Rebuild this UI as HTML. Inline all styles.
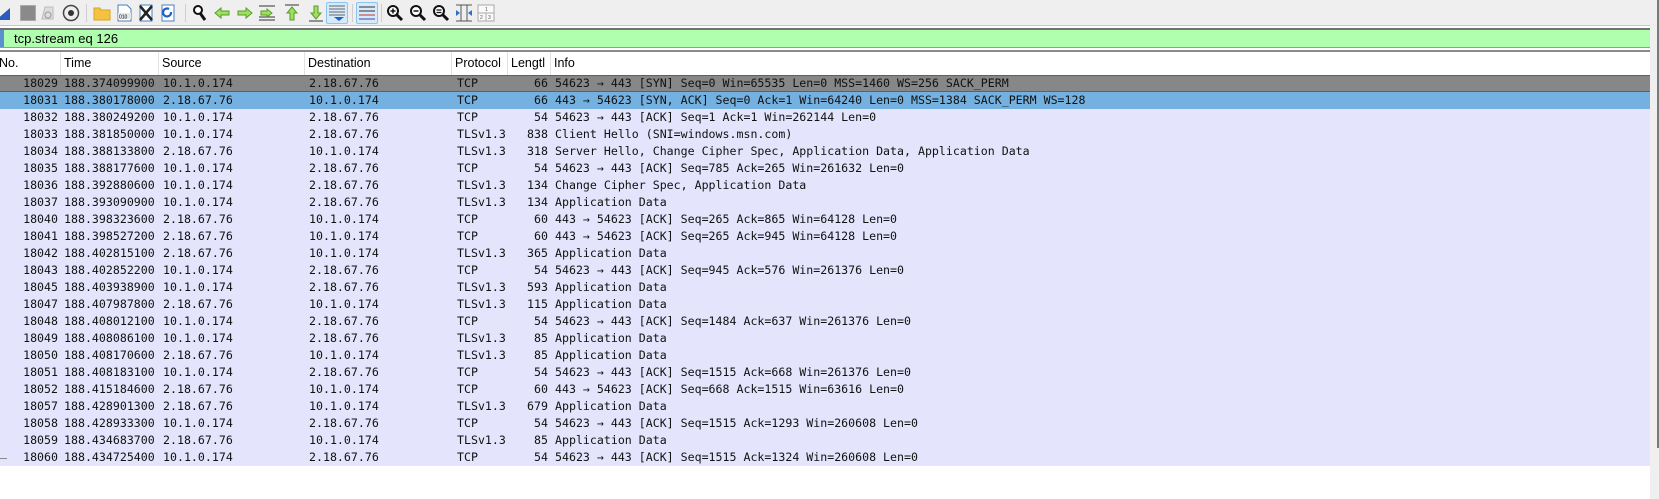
<!DOCTYPE html>
<html><head><meta charset="utf-8"><style>
*{margin:0;padding:0;box-sizing:border-box}
body{width:1659px;height:499px;background:#fff;position:relative;overflow:hidden;font-family:"Liberation Sans",sans-serif}
#tb{position:absolute;left:0;top:0;width:1650px;height:26px;background:#efefef;border-bottom:1px solid #c8c8c8}
.ic{position:absolute;top:4px;width:18px;height:18px}
.sep{position:absolute;top:4px;width:1px;height:18px;background:#cfcfcf}
.box{position:absolute;top:2px;width:22px;height:22px;border:1px solid #8cc4f0;background:#d6eafb;border-radius:2px}
#fb{position:absolute;left:0;top:28px;width:1650px;height:20px;background:#afffaf;border-top:2px solid #707070;border-bottom:1px solid #9a9a9a;font-size:13px;line-height:17px;padding-left:14px;color:#000}
#fb:before{content:"";position:absolute;left:0;top:0;width:4px;height:17px;background:#5a8fd0}
#hd{position:absolute;left:0;top:50px;width:1650px;height:25px;background:#fff;border-top:2px solid #8a8a8a;font-size:12.5px;color:#000}
#hd div{position:absolute;top:0;height:23px;line-height:22px;border-right:1px solid #e2e2e2;padding-left:3px;white-space:nowrap;overflow:hidden}
.r{position:absolute;left:0;width:1650px;height:17px;background:#e4e4fc;font-family:"DejaVu Sans Mono","Liberation Mono",monospace;font-size:11.6px;line-height:17px;color:#111;white-space:pre}
.r span{position:absolute;top:0}
.g{background:#878787;border-top:1px solid #606060;border-bottom:1px solid #606060;line-height:15px}
.b{background:#74b1e0}
#sb{position:absolute;left:1650px;top:0;width:9px;height:499px;background:#efefef}
#th{position:absolute;left:1657px;top:0;width:2px;height:448px;background:#7a7a7a}
.dash{position:absolute;left:0;width:7px;height:1px;background:#888}
</style></head><body>
<div id="tb">
<svg class="ic" style="left:-6px" viewBox="0 0 18 18"><path d="M2 16 L16 4 L16 16Z" fill="#2a5bbf"/></svg>
<div class="ic" style="left:20px;top:5px;width:16px;height:16px;background:#8a8a8a;border:1px solid #aaa"></div>
<svg class="ic" style="left:39px" viewBox="0 0 18 18"><path d="M6 3h8v12H3z" fill="#ddd" stroke="#bbb"/><circle cx="9" cy="11" r="3" fill="none" stroke="#999"/></svg>
<svg class="ic" style="left:62px" viewBox="0 0 18 18"><circle cx="9" cy="9" r="7.5" fill="#eee" stroke="#444" stroke-width="1.5"/><circle cx="9" cy="9" r="3" fill="#333"/></svg>
<div class="sep" style="left:86px"></div>
<svg class="ic" style="left:93px" viewBox="0 0 18 18"><path d="M1 4h6l1 2h9v10H1z" fill="#f5c242" stroke="#d9a520"/></svg>
<svg class="ic" style="left:115px" viewBox="0 0 18 18"><path d="M3 1h9l4 4v12H3z" fill="#fff" stroke="#4a7fc0"/><rect x="3" y="9" width="13" height="6" fill="#e6e6e6"/><text x="4" y="14.5" font-size="5" font-family="Liberation Sans">010</text></svg>
<svg class="ic" style="left:137px" viewBox="0 0 18 18"><path d="M3 1h12v16H3z" fill="#fff" stroke="#4a7fc0"/><path d="M3 2L15 16M15 2L3 16" stroke="#222" stroke-width="2.5"/></svg>
<svg class="ic" style="left:159px" viewBox="0 0 18 18"><path d="M3 1h12v16H3z" fill="#fff" stroke="#4a7fc0"/><path d="M12 8a4 4 0 1 1-2-3" fill="none" stroke="#1f62c4" stroke-width="2.2"/></svg>
<div class="sep" style="left:185px"></div>
<svg class="ic" style="left:191px" viewBox="0 0 18 18"><circle cx="7" cy="6" r="4" fill="#fff" stroke="#111" stroke-width="2"/><path d="M9 9l5 7" stroke="#111" stroke-width="3"/></svg>
<svg class="ic" style="left:213px" viewBox="0 0 18 18"><path d="M2 9l6-5v3h8v4H8v3z" fill="#9ee060" stroke="#5a9a2a"/></svg>
<svg class="ic" style="left:236px" viewBox="0 0 18 18"><path d="M16 9l-6-5v3H2v4h8v3z" fill="#9ee060" stroke="#5a9a2a"/></svg>
<svg class="ic" style="left:258px" viewBox="0 0 18 18"><path d="M1 2h16M1 16h16M1 13h16" stroke="#333"/><path d="M4 9l5-4v2h6v4H9v2z" fill="#9ee060" stroke="#5a9a2a" transform="scale(-1 1) translate(-18 0)"/></svg>
<svg class="ic" style="left:283px" viewBox="0 0 18 18"><path d="M2 1h14" stroke="#333"/><path d="M9 3l-5 6h3v7h4V9h3z" fill="#9ee060" stroke="#5a9a2a"/></svg>
<svg class="ic" style="left:307px" viewBox="0 0 18 18"><path d="M2 17h14" stroke="#333"/><path d="M9 15l-5-6h3V2h4v7h3z" fill="#9ee060" stroke="#5a9a2a"/></svg>
<div class="box" style="left:326px"></div>
<svg class="ic" style="left:328px" viewBox="0 0 18 18"><path d="M1 2h16M1 5h16M1 8h16M1 11h16" stroke="#666"/><path d="M6 13h10l-5 4z" fill="#1f62c4"/></svg>
<div class="sep" style="left:352px"></div>
<div class="box" style="left:356px"></div>
<svg class="ic" style="left:358px" viewBox="0 0 18 18"><path d="M1 3h16M1 7h16" stroke="#333"/><path d="M1 11h16" stroke="#c03030"/><path d="M1 15h16" stroke="#4040b0"/></svg>
<div class="sep" style="left:381px"></div>
<svg class="ic" style="left:386px" viewBox="0 0 18 18"><circle cx="7" cy="7" r="5" fill="#fff" stroke="#111" stroke-width="2"/><path d="M10 10l6 6" stroke="#111" stroke-width="3"/><path d="M4.5 7h5M7 4.5v5" stroke="#111" stroke-width="1.5"/></svg>
<svg class="ic" style="left:409px" viewBox="0 0 18 18"><circle cx="7" cy="7" r="5" fill="#fff" stroke="#111" stroke-width="2"/><path d="M10 10l6 6" stroke="#111" stroke-width="3"/><path d="M4.5 7h5" stroke="#111" stroke-width="1.5"/></svg>
<svg class="ic" style="left:432px" viewBox="0 0 18 18"><circle cx="7" cy="7" r="5" fill="#fff" stroke="#111" stroke-width="2"/><path d="M10 10l6 6" stroke="#111" stroke-width="3"/><path d="M4.5 6h5M4.5 8.5h5" stroke="#111" stroke-width="1.2"/></svg>
<svg class="ic" style="left:455px" viewBox="0 0 18 18"><path d="M1 1h16M1 17h16M6 1v16M12 1v16" stroke="#555"/><path d="M1 6l4 3-4 3zM17 6l-4 3 4 3z" fill="#2a6fd0"/></svg>
<svg class="ic" style="left:477px" viewBox="0 0 18 18"><rect x="1" y="1" width="16" height="16" fill="#fafafa" stroke="#aaa"/><path d="M1 9h16M9 9v8" stroke="#aaa"/><text x="8" y="7" font-size="5" fill="#555">1</text><text x="3" y="15" font-size="5" fill="#555">2</text><text x="11" y="15" font-size="5" fill="#555">3</text></svg>
</div>
<div id="fb">tcp.stream eq 126</div>
<div id="hd">
<div style="left:-4px;width:65px">No.</div>
<div style="left:61px;width:98px">Time</div>
<div style="left:159px;width:146px">Source</div>
<div style="left:305px;width:147px">Destination</div>
<div style="left:452px;width:56px">Protocol</div>
<div style="left:508px;width:43px">Lengtl</div>
<div style="left:551px;width:1099px;border-right:none">Info</div>
</div>
<div id="rows"></div>
<div class="dash" style="top:83px"></div>
<div class="dash" style="top:458px"></div>
<div id="sb"></div><div id="th"></div>
<script>
var d=[
["18029","188.374099900","10.1.0.174","2.18.67.76","TCP","66","54623 → 443 [SYN] Seq=0 Win=65535 Len=0 MSS=1460 WS=256 SACK_PERM","g"],
["18031","188.380178000","2.18.67.76","10.1.0.174","TCP","66","443 → 54623 [SYN, ACK] Seq=0 Ack=1 Win=64240 Len=0 MSS=1384 SACK_PERM WS=128","b"],
["18032","188.380249200","10.1.0.174","2.18.67.76","TCP","54","54623 → 443 [ACK] Seq=1 Ack=1 Win=262144 Len=0"],
["18033","188.381850000","10.1.0.174","2.18.67.76","TLSv1.3","838","Client Hello (SNI=windows.msn.com)"],
["18034","188.388133800","2.18.67.76","10.1.0.174","TLSv1.3","318","Server Hello, Change Cipher Spec, Application Data, Application Data"],
["18035","188.388177600","10.1.0.174","2.18.67.76","TCP","54","54623 → 443 [ACK] Seq=785 Ack=265 Win=261632 Len=0"],
["18036","188.392880600","10.1.0.174","2.18.67.76","TLSv1.3","134","Change Cipher Spec, Application Data"],
["18037","188.393090900","10.1.0.174","2.18.67.76","TLSv1.3","134","Application Data"],
["18040","188.398323600","2.18.67.76","10.1.0.174","TCP","60","443 → 54623 [ACK] Seq=265 Ack=865 Win=64128 Len=0"],
["18041","188.398527200","2.18.67.76","10.1.0.174","TCP","60","443 → 54623 [ACK] Seq=265 Ack=945 Win=64128 Len=0"],
["18042","188.402815100","2.18.67.76","10.1.0.174","TLSv1.3","365","Application Data"],
["18043","188.402852200","10.1.0.174","2.18.67.76","TCP","54","54623 → 443 [ACK] Seq=945 Ack=576 Win=261376 Len=0"],
["18045","188.403938900","10.1.0.174","2.18.67.76","TLSv1.3","593","Application Data"],
["18047","188.407987800","2.18.67.76","10.1.0.174","TLSv1.3","115","Application Data"],
["18048","188.408012100","10.1.0.174","2.18.67.76","TCP","54","54623 → 443 [ACK] Seq=1484 Ack=637 Win=261376 Len=0"],
["18049","188.408086100","10.1.0.174","2.18.67.76","TLSv1.3","85","Application Data"],
["18050","188.408170600","2.18.67.76","10.1.0.174","TLSv1.3","85","Application Data"],
["18051","188.408183100","10.1.0.174","2.18.67.76","TCP","54","54623 → 443 [ACK] Seq=1515 Ack=668 Win=261376 Len=0"],
["18052","188.415184600","2.18.67.76","10.1.0.174","TCP","60","443 → 54623 [ACK] Seq=668 Ack=1515 Win=63616 Len=0"],
["18057","188.428901300","2.18.67.76","10.1.0.174","TLSv1.3","679","Application Data"],
["18058","188.428933300","10.1.0.174","2.18.67.76","TCP","54","54623 → 443 [ACK] Seq=1515 Ack=1293 Win=260608 Len=0"],
["18059","188.434683700","2.18.67.76","10.1.0.174","TLSv1.3","85","Application Data"],
["18060","188.434725400","10.1.0.174","2.18.67.76","TCP","54","54623 → 443 [ACK] Seq=1515 Ack=1324 Win=260608 Len=0"]];
var h="";
d.forEach(function(r,i){
h+='<div class="r '+(r[7]||"")+'" style="top:'+(75+i*17)+'px">'+
'<span style="right:1592px">'+r[0]+'</span><span style="left:64px">'+r[1]+'</span><span style="left:163px">'+r[2]+'</span><span style="left:309px">'+r[3]+'</span><span style="left:457px">'+r[4]+'</span><span style="right:1102px">'+r[5]+'</span><span style="left:555px">'+r[6]+'</span></div>';
});
document.getElementById("rows").innerHTML=h;
</script>
</body></html>
